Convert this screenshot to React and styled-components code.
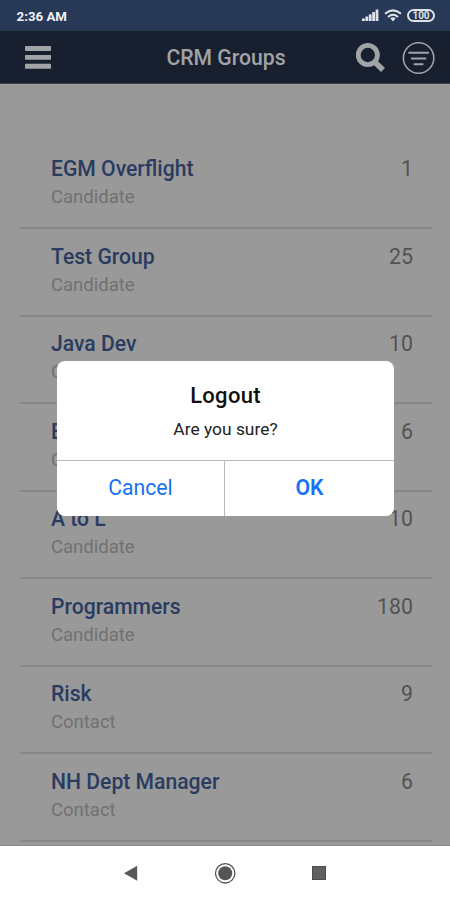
import React, { useState } from "react";
import styled, { createGlobalStyle } from "styled-components";

const groups = [
    { id: 1, title: "EGM Overflight", type: "Candidate", count: 1 },
    { id: 2, title: "Test Group", type: "Candidate", count: 25 },
    { id: 3, title: "Java Dev", type: "Candidate", count: 10 },
    { id: 4, title: "Engineers", type: "Candidate", count: 6 },
    { id: 5, title: "A to L", type: "Candidate", count: 10 },
    { id: 6, title: "Programmers", type: "Candidate", count: 180 },
    { id: 7, title: "Risk", type: "Contact", count: 9 },
    { id: 8, title: "NH Dept Manager", type: "Contact", count: 6 },
];

const App = () => {
    const [showLogout, setShowLogout] = useState(true);

    function handleClose(){
        setShowLogout(false);
    }
    return (
        <Screen>
            <GlobalStyle />
            <StatusBar>
                <Clock>2:36 AM</Clock>
                <StatusIcons>
                    <svg width={17} height={13} viewBox="0 0 17 13" fill="#dfe2e8">
                        <rect x={0} y={9.5} width={2.8} height={2.5} />
                        <rect x={3.4} y={7.5} width={2.8} height={4.5} />
                        <rect x={6.8} y={5.3} width={2.8} height={6.7} />
                        <rect x={10.2} y={3} width={2.8} height={9} />
                        <rect x={13.6} y={0.5} width={2.8} height={11.5} />
                    </svg>
                    <svg width={18} height={13} viewBox="0 0 18 13" fill="none" stroke="#dfe2e8" strokeWidth={2}>
                        <path d="M1 4.8Q9 -2 17 4.8" />
                        <path d="M4 8Q9 3.6 14 8" />
                        <path d="M6.3 9.3Q9 7.3 11.7 9.3L9 12.4Z" fill="#dfe2e8" stroke="none" />
                    </svg>
                    <Battery>100</Battery>
                </StatusIcons>
            </StatusBar>
            <Header>
                <svg width={26} height={23} viewBox="0 0 26 23" fill="#a2a3a6">
                    <rect x={0} y={0} width={26} height={5} rx={0.8} />
                    <rect x={0} y={9} width={26} height={4.8} rx={0.8} />
                    <rect x={0} y={17.8} width={26} height={5} rx={0.8} />
                </svg>
                <HeaderTitle>CRM Groups</HeaderTitle>
                <HeaderActions>
                    <svg width={30} height={30} viewBox="0 0 30 30" fill="none" stroke="#a2a3a6">
                        <circle cx={11.8} cy={12} r={9.6} strokeWidth={4.8} />
                        <line x1={18.5} y1={18.8} x2={27} y2={27} strokeWidth={5.6} />
                    </svg>
                    <svg width={34} height={34} viewBox="0 0 34 34" fill="none" stroke="#a2a3a6">
                        <circle cx={16.6} cy={17} r={15.2} strokeWidth={1.6} />
                        <path d="M7.1 11.8H26.1M9.8 17.4H23.4M12.6 23.2H20.6" strokeWidth={2} strokeLinecap="round" />
                    </svg>
                </HeaderActions>
            </Header>
            <GroupList>
                {groups.map((group) =>
                    <GroupRow key={group.id}>
                        <div>
                            <GroupTitle>{group.title}</GroupTitle>
                            <GroupType>{group.type}</GroupType>
                        </div>
                        <Count>{group.count}</Count>
                    </GroupRow>
                )}
            </GroupList>
            <NavBar>
                <svg width={14} height={16} viewBox="0 0 14 16">
                    <path d="M0 8.2L13.2 0.7V15.7Z" fill="#585858" />
                </svg>
                <svg width={22} height={22} viewBox="0 0 22 22">
                    <circle cx={11.2} cy={11.3} r={9.7} fill="none" stroke="#555555" strokeWidth={1.3} />
                    <circle cx={11.2} cy={11.3} r={7} fill="#555555" />
                </svg>
                <svg width={14} height={14} viewBox="0 0 14 14">
                    <rect x={0.5} y={0.5} width={13} height={13} fill="#606060" stroke="#4c4c4c" />
                </svg>
            </NavBar>
            {showLogout && (
                <Dialog role="dialog">
                    <DialogBody>
                        <DialogTitle>Logout</DialogTitle>
                        <DialogText>Are you sure?</DialogText>
                    </DialogBody>
                    <DialogButtons>
                        <DialogButton onClick={handleClose}>Cancel</DialogButton>
                        <DialogButton $primary onClick={handleClose}>OK</DialogButton>
                    </DialogButtons>
                </Dialog>
            )}
        </Screen>
    );
};

export default App;

const GlobalStyle = createGlobalStyle`
    * {
        box-sizing: border-box;
    }
    body {
        margin: 0;
        font-family: Roboto, "Liberation Sans", sans-serif;
    }
    svg {
        display: block;
        flex-shrink: 0;
    }
`

const Screen = styled.div`
    position: relative;
    display: flex;
    flex-direction: column;
    width: 450px;
    height: 900px;
    overflow: hidden;
    background-color: #999999;
`

const StatusBar = styled.div`
    display: flex;
    justify-content: space-between;
    align-items: center;
    height: 31px;
    padding: 0 15px 0 16.5px;
    background-color: #283857;
`

const Clock = styled.div`
    padding-top: 1px;
    color: #f0f2f5;
    font-size: 13.3px;
    font-weight: 700;
`

const StatusIcons = styled.div`
    display: flex;
    align-items: center;
    gap: 5px;
`

const Battery = styled.div`
    width: 28px;
    height: 13px;
    border: 2px solid #dfe2e8;
    border-radius: 7px;
    color: #dfe2e8;
    font-size: 10px;
    font-weight: 700;
    line-height: 9px;
    text-align: center;
`

const Header = styled.div`
    display: flex;
    align-items: center;
    justify-content: space-between;
    height: 53px;
    padding: 1px 14px 0 25px;
    background-color: #182030;
    border-bottom: 1px solid #3d424b;
`

const HeaderTitle = styled.div`
    margin-left: 45px;
    color: #a2a3a6;
    font-size: 21.2px;
    font-weight: 500;
`

const HeaderActions = styled.div`
    display: flex;
    align-items: center;
    gap: 16px;
`

const GroupList = styled.div`
    flex: 1;
    min-height: 0;
    padding: 57.45px 18px 0 20px;
    overflow: hidden;
    border-bottom: 1px solid #8b8b8b;
`

const GroupRow = styled.div`
    display: flex;
    justify-content: space-between;
    height: 87.57px;
    padding: 13.5px 19px 0 31px;
    border-bottom: 2px solid #878787;
`

const GroupTitle = styled.div`
    color: #293c60;
    font-size: 21.15px;
    font-weight: 500;
    line-height: 28px;
`

const GroupType = styled.div`
    margin-top: 2px;
    color: #707173;
    font-size: 18.5px;
    line-height: 24px;
`

const Count = styled.div`
    color: #525355;
    font-size: 21.3px;
    line-height: 28px;
`

const NavBar = styled.div`
    display: flex;
    align-items: center;
    justify-content: space-between;
    height: 54px;
    padding: 0 124px;
    background-color: #ffffff;
`

const Dialog = styled.div`
    position: absolute;
    top: 361px;
    left: 57px;
    width: 337px;
    height: 155px;
    display: flex;
    flex-direction: column;
    overflow: hidden;
    border-radius: 8px;
    background-color: #ffffff;
`

const DialogBody = styled.div`
    flex: 1;
    padding-top: 21px;
    text-align: center;
`

const DialogTitle = styled.div`
    color: #111111;
    font-size: 22px;
    font-weight: 500;
    letter-spacing: 0.3px;
    line-height: 28px;
`

const DialogText = styled.div`
    margin-top: 7px;
    color: #222222;
    font-size: 17.4px;
    line-height: 24px;
`

const DialogButtons = styled.div`
    display: flex;
    height: 56px;
    border-top: 1px solid #b8b8b8;
`

const DialogButton = styled.button`
    flex: ${props => props.$primary ? "1" : "0 0 167px"};
    padding: 0 0 2px;
    border: none;
    border-left: ${props => props.$primary ? "1px solid #b8b8b8" : "none"};
    background: none;
    color: #1671f3;
    font-family: inherit;
    font-size: 21.2px;
    font-weight: ${props => props.$primary ? 600 : 400};
    cursor: pointer;
`
